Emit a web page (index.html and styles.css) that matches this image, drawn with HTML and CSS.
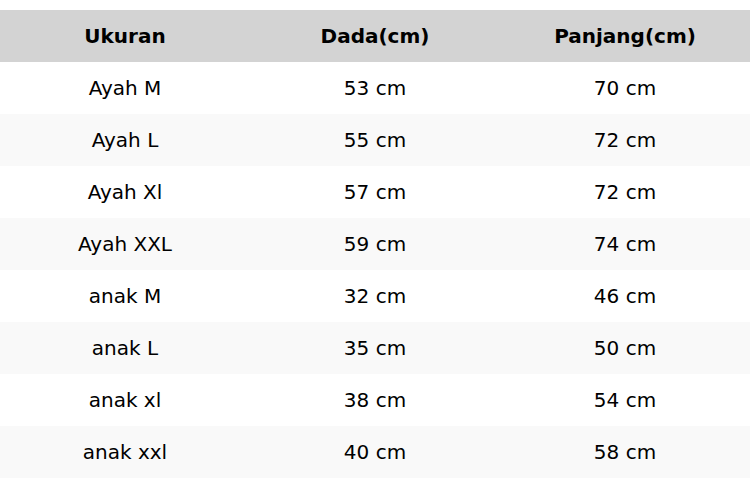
FILE: index.html
```html
<!DOCTYPE html>
<html>
<head>
<meta charset="utf-8">
<link rel="stylesheet" href="styles.css">
</head>
<body>
<table class="size-table">
  <thead>
    <tr><th>Ukuran</th><th>Dada(cm)</th><th>Panjang(cm)</th></tr>
  </thead>
  <tbody>
    <tr><td>Ayah M</td><td>53 cm</td><td>70 cm</td></tr>
    <tr><td>Ayah L</td><td>55 cm</td><td>72 cm</td></tr>
    <tr><td>Ayah Xl</td><td>57 cm</td><td>72 cm</td></tr>
    <tr><td>Ayah XXL</td><td>59 cm</td><td>74 cm</td></tr>
    <tr><td>anak M</td><td>32 cm</td><td>46 cm</td></tr>
    <tr><td>anak L</td><td>35 cm</td><td>50 cm</td></tr>
    <tr><td>anak xl</td><td>38 cm</td><td>54 cm</td></tr>
    <tr><td>anak xxl</td><td>40 cm</td><td>58 cm</td></tr>
  </tbody>
</table>
</body>
</html>
```
FILE: styles.css
```css
html, body {
  margin: 0;
  padding: 0;
  background: #ffffff;
}
body {
  padding-top: 10px;
  font-family: "DejaVu Sans", sans-serif;
  color: #000;
}
.size-table {
  width: 100%;
  border-collapse: collapse;
  table-layout: fixed;
  font-size: 20px;
}
.size-table th,
.size-table td {
  height: 52px;
  padding: 0;
  text-align: center;
  vertical-align: middle;
}
.size-table th {
  background: #d3d3d3;
  font-weight: bold;
}
.size-table tbody tr:nth-child(even) td {
  background: #f9f9f9;
}
```
